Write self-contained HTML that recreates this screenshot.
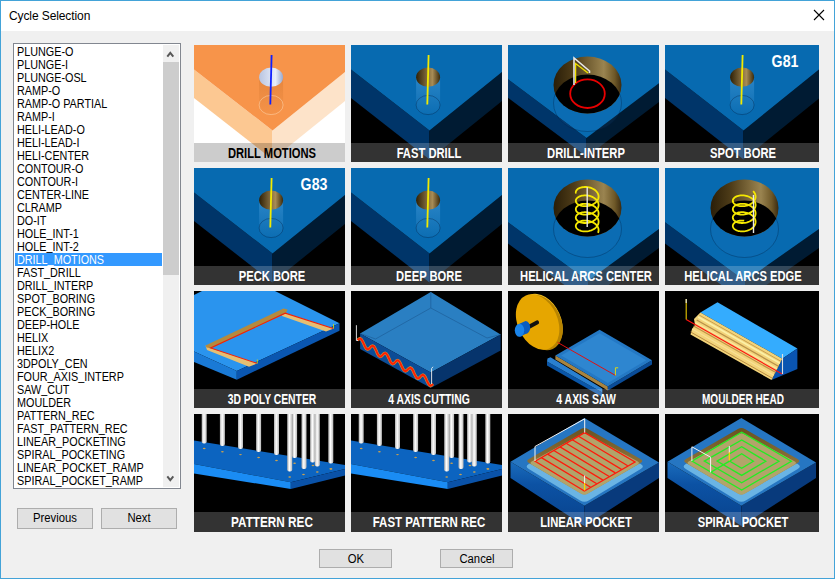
<!DOCTYPE html>
<html><head><meta charset="utf-8">
<style>
*{margin:0;padding:0;box-sizing:border-box}
html,body{width:835px;height:579px;overflow:hidden;background:#f0f0f0;font-family:"Liberation Sans",sans-serif}
#win{position:absolute;left:0;top:0;width:835px;height:579px;border:1px solid #43a3d8;background:#f0f0f0}
#title{position:absolute;left:0;top:0;width:833px;height:30px;background:#fff}
#title span{position:absolute;left:8px;top:8px;font-size:12px;color:#000;letter-spacing:-0.1px}
#close{position:absolute;left:812px;top:8px}
#list{position:absolute;left:12px;top:42px;width:168px;height:446px;border:1px solid #828790;background:#fff;overflow:hidden}
#items{position:absolute;left:1px;top:1px;width:147px}
.it{height:13px;line-height:13px;font-size:12px;color:#000;white-space:nowrap;position:relative}
.it span{position:absolute;left:1.5px;top:1px;transform:scaleX(0.9);transform-origin:0 0}
.it i{font-style:normal;position:relative;top:-1px}
.it.sel{background:#3399ff;color:#fff}
#sb{position:absolute;left:149px;top:1px;width:16px;height:442px;background:#f0f0f0}
#thumb{position:absolute;left:0;top:17px;width:16px;height:213px;background:#cdcdcd}
.btn{position:absolute;height:21px;border:1px solid #adadad;background:#e1e1e1;font-size:12px;color:#000;line-height:19px}
.btn span{position:absolute;left:50%;top:0;transform:translateX(-50%) scaleX(0.94);white-space:nowrap}
#grid{position:absolute;left:0;top:0}
.tile{position:absolute;overflow:hidden;background:#000}
.tile svg{position:absolute;left:0;top:0}
.lab{position:absolute;left:0;bottom:0;width:100%}
.lab span{position:absolute;left:77.8px;top:3px;font-size:14px;font-weight:bold;color:#fff;white-space:nowrap;transform:translateX(-50%) scaleX(0.8);line-height:14px}
</style></head><body>
<div id="win">
 <div id="title"><span>Cycle Selection</span>
  <svg id="close" width="12" height="12" viewBox="0 0 12 12"><path d="M1 1L11 11M11 1L1 11" stroke="#000" stroke-width="1.1"/></svg>
 </div>
 <div id="list">
  <div id="items">
   <div class="it"><span>PLUNGE-O</span></div>
   <div class="it"><span>PLUNGE-I</span></div>
   <div class="it"><span>PLUNGE-OSL</span></div>
   <div class="it"><span>RAMP-O</span></div>
   <div class="it"><span>RAMP-O PARTIAL</span></div>
   <div class="it"><span>RAMP-I</span></div>
   <div class="it"><span>HELI-LEAD-O</span></div>
   <div class="it"><span>HELI-LEAD-I</span></div>
   <div class="it"><span>HELI-CENTER</span></div>
   <div class="it"><span>CONTOUR-O</span></div>
   <div class="it"><span>CONTOUR-I</span></div>
   <div class="it"><span>CENTER-LINE</span></div>
   <div class="it"><span>CLRAMP</span></div>
   <div class="it"><span>DO-IT</span></div>
   <div class="it"><span>HOLE<i>_</i>INT-1</span></div>
   <div class="it"><span>HOLE<i>_</i>INT-2</span></div>
   <div class="it sel"><span>DRILL<i>_</i>MOTIONS</span></div>
   <div class="it"><span>FAST<i>_</i>DRILL</span></div>
   <div class="it"><span>DRILL<i>_</i>INTERP</span></div>
   <div class="it"><span>SPOT<i>_</i>BORING</span></div>
   <div class="it"><span>PECK<i>_</i>BORING</span></div>
   <div class="it"><span>DEEP-HOLE</span></div>
   <div class="it"><span>HELIX</span></div>
   <div class="it"><span>HELIX2</span></div>
   <div class="it"><span>3DPOLY<i>_</i>CEN</span></div>
   <div class="it"><span>FOUR<i>_</i>AXIS<i>_</i>INTERP</span></div>
   <div class="it"><span>SAW<i>_</i>CUT</span></div>
   <div class="it"><span>MOULDER</span></div>
   <div class="it"><span>PATTERN<i>_</i>REC</span></div>
   <div class="it"><span>FAST<i>_</i>PATTERN<i>_</i>REC</span></div>
   <div class="it"><span>LINEAR<i>_</i>POCKETING</span></div>
   <div class="it"><span>SPIRAL<i>_</i>POCKETING</span></div>
   <div class="it"><span>LINEAR<i>_</i>POCKET<i>_</i>RAMP</span></div>
   <div class="it"><span>SPIRAL<i>_</i>POCKET<i>_</i>RAMP</span></div>
  </div>
  <div id="sb">
   <div id="thumb"></div>
   <svg style="position:absolute;left:3px;top:5px" width="9" height="8" viewBox="0 0 9 8"><path d="M1.3 6.6L4.3 2.9L7.3 6.6" fill="none" stroke="#585858" stroke-width="2"/></svg>
   <svg style="position:absolute;left:3px;top:430px" width="9" height="8" viewBox="0 0 9 8"><path d="M1.3 1.4L4.3 5.1L7.3 1.4" fill="none" stroke="#585858" stroke-width="2"/></svg>
  </div>
 </div>
 <div class="btn" style="left:16px;top:507px;width:76px"><span>Previous</span></div>
 <div class="btn" style="left:100px;top:507px;width:76px"><span>Next</span></div>
 <div class="btn" style="left:318px;top:548px;width:73px;height:19px;line-height:18px"><span>OK</span></div>
 <div class="btn" style="left:439px;top:548px;width:73px;height:19px;line-height:18px"><span>Cancel</span></div>
</div>
<div class="tile selt" style="left:194px;top:45px;width:151px;height:117px"><svg width="151" height="117" viewBox="0 0 151 117"><rect width="151" height="117" fill="#ffffff"/><polygon points="0.0,24.5 78.5,85.5 78.5,114.5 0.0,53.0" fill="#fcc892"/><polygon points="78.5,85.5 151.0,27.0 151.0,56.0 78.5,114.5" fill="#fde3c9"/><polygon points="0.0,0.0 151.0,0.0 151.0,27.0 78.5,85.5 0.0,24.5" fill="#f7944a"/><defs><linearGradient id="hg0" x1="0" x2="1" y1="0" y2="0"><stop offset="0" stop-color="#b8c4e0"/><stop offset="0.68" stop-color="#e8eefa"/><stop offset="1" stop-color="#9aa8cc"/></linearGradient></defs><defs><linearGradient id="cy0" x1="0" x2="0" y1="0" y2="1"><stop offset="0" stop-color="rgba(200,110,40,0.35)" stop-opacity="1"/><stop offset="1" stop-color="rgba(200,110,40,0.35)" stop-opacity="0.15"/></linearGradient></defs><path d="M65.1 32.2 L65.1 60 A12 9.6 0 0 0 89.1 60 L89.1 32.2 Z" fill="url(#cy0)"/><ellipse cx="77.1" cy="60" rx="12" ry="9.6" fill="none" stroke="rgba(255,230,200,0.6)" stroke-width="0.7"/><ellipse cx="77.1" cy="32.2" rx="12" ry="9.6" fill="url(#hg0)"/><line x1="77.6" y1="10" x2="76.3" y2="59.4" stroke="#1020ff" stroke-width="1.8"/><rect x="0" y="98" width="151" height="19" fill="rgba(0,0,0,0.2)"/></svg><div class="lab" style="height:19px"><span style="color:#000">DRILL MOTIONS</span></div></div>
<div class="tile" style="left:351px;top:45px;width:151px;height:117px"><svg width="151" height="117" viewBox="0 0 151 117"><rect width="151" height="117" fill="#000000"/><polygon points="0.0,24.5 78.5,85.5 78.5,114.5 0.0,53.0" fill="#003569"/><polygon points="78.5,85.5 151.0,27.0 151.0,56.0 78.5,114.5" fill="#001b33"/><polygon points="0.0,0.0 151.0,0.0 151.0,27.0 78.5,85.5 0.0,24.5" fill="#076ab0"/><defs><linearGradient id="hg1" x1="0" x2="1" y1="0" y2="0"><stop offset="0" stop-color="#2e2006"/><stop offset="0.68" stop-color="#a88c56"/><stop offset="1" stop-color="#3a2a0c"/></linearGradient></defs><defs><linearGradient id="cy1" x1="0" x2="0" y1="0" y2="1"><stop offset="0" stop-color="rgba(130,200,255,0.28)" stop-opacity="1"/><stop offset="1" stop-color="rgba(130,200,255,0.28)" stop-opacity="0.15"/></linearGradient></defs><path d="M65.1 32.2 L65.1 60 A12 9.6 0 0 0 89.1 60 L89.1 32.2 Z" fill="url(#cy1)"/><ellipse cx="77.1" cy="60" rx="12" ry="9.6" fill="none" stroke="rgba(0,20,50,0.45)" stroke-width="0.7"/><ellipse cx="77.1" cy="32.2" rx="12" ry="9.6" fill="url(#hg1)"/><line x1="77.6" y1="10" x2="76.3" y2="59.4" stroke="#f2ea00" stroke-width="1.8"/><rect x="0" y="98" width="151" height="19" fill="rgba(255,255,255,0.2)"/></svg><div class="lab" style="height:19px"><span style="color:#fff">FAST DRILL</span></div></div>
<div class="tile" style="left:508px;top:45px;width:151px;height:117px"><svg width="151" height="117" viewBox="0 0 151 117"><rect width="151" height="117" fill="#000000"/><polygon points="0.0,34.2 78.5,93.0 78.5,111.6 0.0,52.8" fill="#003569"/><polygon points="78.5,93.0 151.0,38.3 151.0,57.0 78.5,111.7" fill="#001b33"/><polygon points="0.0,0.0 151.0,0.0 151.0,38.3 78.5,93.0 0.0,34.2" fill="#076ab0"/><defs><linearGradient id="bg2" x1="0" x2="1" y1="0" y2="0"><stop offset="0" stop-color="#2a1e08"/><stop offset="0.3" stop-color="#4e3c18"/><stop offset="0.74" stop-color="#9a8450"/><stop offset="0.9" stop-color="#6e5828"/><stop offset="1" stop-color="#3a2a10"/></linearGradient><clipPath id="cp2"><ellipse cx="79.5" cy="40" rx="34" ry="28.5"/></clipPath></defs><ellipse cx="79.5" cy="58" rx="34" ry="28.5" fill="rgba(60,140,220,0.08)" stroke="rgba(0,25,60,0.45)" stroke-width="0.7"/><ellipse cx="79.5" cy="40" rx="34" ry="28.5" fill="url(#bg2)"/><ellipse cx="79.5" cy="58" rx="34" ry="28.5" fill="#000" clip-path="url(#cp2)"/><ellipse cx="79.5" cy="48.7" rx="17.3" ry="14.3" fill="none" stroke="#e80000" stroke-width="1.8"/><polyline points="66,40 66,13 81.5,26 81.5,28" fill="none" stroke="#e8e8e8" stroke-width="1.6"/><polyline points="67.6,38 67.6,18.5 80,28" fill="none" stroke="#f0e000" stroke-width="1.3"/><rect x="0" y="98" width="151" height="19" fill="rgba(255,255,255,0.2)"/></svg><div class="lab" style="height:19px"><span style="color:#fff">DRILL-INTERP</span></div></div>
<div class="tile" style="left:665px;top:45px;width:154px;height:117px"><svg width="154" height="117" viewBox="0 0 154 117"><rect width="154" height="117" fill="#000000"/><polygon points="0.0,24.5 78.5,85.5 78.5,114.5 0.0,53.0" fill="#003569"/><polygon points="78.5,85.5 154.0,24.6 154.0,53.6 78.5,114.5" fill="#001b33"/><polygon points="0.0,0.0 154.0,0.0 154.0,24.6 78.5,85.5 0.0,24.5" fill="#076ab0"/><defs><linearGradient id="hg3" x1="0" x2="1" y1="0" y2="0"><stop offset="0" stop-color="#2e2006"/><stop offset="0.68" stop-color="#a88c56"/><stop offset="1" stop-color="#3a2a0c"/></linearGradient></defs><defs><linearGradient id="cy3" x1="0" x2="0" y1="0" y2="1"><stop offset="0" stop-color="rgba(130,200,255,0.28)" stop-opacity="1"/><stop offset="1" stop-color="rgba(130,200,255,0.28)" stop-opacity="0.15"/></linearGradient></defs><path d="M65.1 32.2 L65.1 60 A12 9.6 0 0 0 89.1 60 L89.1 32.2 Z" fill="url(#cy3)"/><ellipse cx="77.1" cy="60" rx="12" ry="9.6" fill="none" stroke="rgba(0,20,50,0.45)" stroke-width="0.7"/><ellipse cx="77.1" cy="32.2" rx="12" ry="9.6" fill="url(#hg3)"/><line x1="77.6" y1="10" x2="76.3" y2="59.4" stroke="#f2ea00" stroke-width="1.8"/><text x="0" y="0" transform="translate(106.6 21.9) scale(0.86 1)" font-size="16.5" font-weight="bold" fill="#fff" font-family="Liberation Sans">G81</text><rect x="0" y="98" width="154" height="19" fill="rgba(255,255,255,0.2)"/></svg><div class="lab" style="height:19px"><span style="color:#fff">SPOT BORE</span></div></div>
<div class="tile" style="left:194px;top:168px;width:151px;height:117px"><svg width="151" height="117" viewBox="0 0 151 117"><rect width="151" height="117" fill="#000000"/><polygon points="0.0,24.5 78.5,85.5 78.5,114.5 0.0,53.0" fill="#003569"/><polygon points="78.5,85.5 151.0,27.0 151.0,56.0 78.5,114.5" fill="#001b33"/><polygon points="0.0,0.0 151.0,0.0 151.0,27.0 78.5,85.5 0.0,24.5" fill="#076ab0"/><defs><linearGradient id="hg4" x1="0" x2="1" y1="0" y2="0"><stop offset="0" stop-color="#2e2006"/><stop offset="0.68" stop-color="#a88c56"/><stop offset="1" stop-color="#3a2a0c"/></linearGradient></defs><defs><linearGradient id="cy4" x1="0" x2="0" y1="0" y2="1"><stop offset="0" stop-color="rgba(130,200,255,0.28)" stop-opacity="1"/><stop offset="1" stop-color="rgba(130,200,255,0.28)" stop-opacity="0.15"/></linearGradient></defs><path d="M65.1 32.2 L65.1 60 A12 9.6 0 0 0 89.1 60 L89.1 32.2 Z" fill="url(#cy4)"/><ellipse cx="77.1" cy="60" rx="12" ry="9.6" fill="none" stroke="rgba(0,20,50,0.45)" stroke-width="0.7"/><ellipse cx="77.1" cy="32.2" rx="12" ry="9.6" fill="url(#hg4)"/><line x1="77.6" y1="10" x2="76.3" y2="59.4" stroke="#f2ea00" stroke-width="1.8"/><text x="0" y="0" transform="translate(106.6 21.9) scale(0.86 1)" font-size="16.5" font-weight="bold" fill="#fff" font-family="Liberation Sans">G83</text><rect x="0" y="98" width="151" height="19" fill="rgba(255,255,255,0.2)"/></svg><div class="lab" style="height:19px"><span style="color:#fff">PECK BORE</span></div></div>
<div class="tile" style="left:351px;top:168px;width:151px;height:117px"><svg width="151" height="117" viewBox="0 0 151 117"><rect width="151" height="117" fill="#000000"/><polygon points="0.0,24.5 78.5,85.5 78.5,114.5 0.0,53.0" fill="#003569"/><polygon points="78.5,85.5 151.0,27.0 151.0,56.0 78.5,114.5" fill="#001b33"/><polygon points="0.0,0.0 151.0,0.0 151.0,27.0 78.5,85.5 0.0,24.5" fill="#076ab0"/><defs><linearGradient id="hg5" x1="0" x2="1" y1="0" y2="0"><stop offset="0" stop-color="#2e2006"/><stop offset="0.68" stop-color="#a88c56"/><stop offset="1" stop-color="#3a2a0c"/></linearGradient></defs><defs><linearGradient id="cy5" x1="0" x2="0" y1="0" y2="1"><stop offset="0" stop-color="rgba(130,200,255,0.28)" stop-opacity="1"/><stop offset="1" stop-color="rgba(130,200,255,0.28)" stop-opacity="0.15"/></linearGradient></defs><path d="M65.1 32.2 L65.1 60 A12 9.6 0 0 0 89.1 60 L89.1 32.2 Z" fill="url(#cy5)"/><ellipse cx="77.1" cy="60" rx="12" ry="9.6" fill="none" stroke="rgba(0,20,50,0.45)" stroke-width="0.7"/><ellipse cx="77.1" cy="32.2" rx="12" ry="9.6" fill="url(#hg5)"/><line x1="77.6" y1="10" x2="76.3" y2="59.4" stroke="#f2ea00" stroke-width="1.8"/><rect x="0" y="98" width="151" height="19" fill="rgba(255,255,255,0.2)"/></svg><div class="lab" style="height:19px"><span style="color:#fff">DEEP BORE</span></div></div>
<div class="tile" style="left:508px;top:168px;width:151px;height:117px"><svg width="151" height="117" viewBox="0 0 151 117"><rect width="151" height="117" fill="#000000"/><polygon points="0.0,54.3 80.0,113.0 80.0,134.3 0.0,75.6" fill="#003569"/><polygon points="80.0,113.0 151.0,61.0 151.0,80.0 80.0,132.0" fill="#001b33"/><polygon points="0.0,0.0 151.0,0.0 151.0,61.0 80.0,113.0 0.0,54.3" fill="#076ab0"/><defs><linearGradient id="bg6" x1="0" x2="1" y1="0" y2="0"><stop offset="0" stop-color="#2a1e08"/><stop offset="0.3" stop-color="#4e3c18"/><stop offset="0.74" stop-color="#9a8450"/><stop offset="0.9" stop-color="#6e5828"/><stop offset="1" stop-color="#3a2a10"/></linearGradient><clipPath id="cp6"><ellipse cx="79.5" cy="40" rx="34" ry="28.5"/></clipPath></defs><ellipse cx="79.5" cy="61" rx="34" ry="28.5" fill="rgba(60,140,220,0.08)" stroke="rgba(0,25,60,0.45)" stroke-width="0.7"/><ellipse cx="79.5" cy="40" rx="34" ry="28.5" fill="url(#bg6)"/><ellipse cx="79.5" cy="61" rx="34" ry="28.5" fill="#000" clip-path="url(#cp6)"/><path d="M68.03,25.60 L67.84,24.88 L67.81,24.16 L67.95,23.44 L68.24,22.73 L68.70,22.05 L69.31,21.42 L70.05,20.84 L70.93,20.32 L71.93,19.87 L73.04,19.51 L74.23,19.24 L75.49,19.06 L76.81,18.98 L78.16,19.01 L79.52,19.14 L80.89,19.38 L82.22,19.72 L83.52,20.17 L84.75,20.72 L85.90,21.35 L86.96,22.08 L87.90,22.88 L88.72,23.75 L89.40,24.68 L89.94,25.65 L90.32,26.67 L90.54,27.70 L90.60,28.75 L90.49,29.79 L90.23,30.82 L89.80,31.83 L89.22,32.79 L88.50,33.71 L87.64,34.56 L86.67,35.34 L85.58,36.04 L84.41,36.65 L83.15,37.17 L81.85,37.58 L80.50,37.90 L79.14,38.11 L77.77,38.21 L76.43,38.21 L75.13,38.10 L73.88,37.89 L72.71,37.59 L71.64,37.21 L70.67,36.74 L69.83,36.20 L69.12,35.60 L68.55,34.96 L68.14,34.27 L67.89,33.56 L67.80,32.84 L67.87,32.11 L68.11,31.40 L68.51,30.71 L69.06,30.06 L69.75,29.45 L70.58,28.91 L71.54,28.43 L72.60,28.04 L73.76,27.73 L75.00,27.52 L76.30,27.40 L77.64,27.39 L79.00,27.48 L80.37,27.68 L81.72,27.98 L83.03,28.39 L84.29,28.90 L85.47,29.50 L86.57,30.19 L87.55,30.96 L88.42,31.81 L89.16,32.72 L89.75,33.68 L90.19,34.68 L90.47,35.71 L90.60,36.75 L90.55,37.80 L90.35,38.83 L89.98,39.85 L89.46,40.83 L88.79,41.76 L87.98,42.64 L87.05,43.45 L86.01,44.18 L84.86,44.83 L83.64,45.38 L82.35,45.84 L81.02,46.19 L79.66,46.44 L78.29,46.58 L76.94,46.62 L75.62,46.55 L74.35,46.38 L73.15,46.12 L72.03,45.76 L71.03,45.33 L70.13,44.81 L69.37,44.24 L68.75,43.61 L68.28,42.94 L67.97,42.23 L67.82,41.51 L67.83,40.79 L68.00,40.07 L68.34,39.37 L68.83,38.70 L69.47,38.08 L70.25,37.51 L71.16,37.01 L72.19,36.58 L73.31,36.24 L74.52,35.99 L75.80,35.83 L77.13,35.78 L78.48,35.83 L79.85,35.99 L81.21,36.25 L82.54,36.62 L83.82,37.09 L85.03,37.66 L86.16,38.32 L87.19,39.06 L88.11,39.88 L88.89,40.77 L89.54,41.71 L90.04,42.69 L90.39,43.71 L90.57,44.75 L90.59,45.80 L90.44,46.84 L90.14,47.87 L89.68,48.86 L89.06,49.81 L88.31,50.71 L87.42,51.55 L86.42,52.31 L85.31,52.99 L84.11,53.58 L82.85,54.08 L81.53,54.47 L80.18,54.76 L78.81,54.94 L77.45,55.02 L76.11,54.99 L74.82,54.86 L73.59,54.63 L72.45,54.31 L71.40,53.90 L70.46,53.42 L69.65,52.87 L68.97,52.25 L68.44,51.60 L68.07,50.90 L67.85,50.19 L67.80,49.46 L67.92,48.74 L68.19,48.03 L68.62,47.35 L69.21,46.71 L69.94,46.12 L70.80,45.59 L71.78,45.13 L72.87,44.76 L74.05,44.47 L75.31,44.28 L76.62,44.19 L77.96,44.20 L79.33,44.32 L80.69,44.54 L82.03,44.87 L83.34,45.30 L84.58,45.83 L85.74,46.46 L86.81,47.17 L87.77,47.96 L88.61,48.82 L89.31,49.74 L89.87,50.71 L90.27,51.72 L90.52,52.75 L90.60,53.80 L90.52,54.85 L90.27,55.88 L89.87,56.89 L89.31,57.86 L88.61,58.78 L87.77,59.64 L86.81,60.43 L85.74,61.14 L84.58,61.77 L83.34,62.30 L82.04,62.73 L80.69,63.06 L79.33,63.28 L77.97,63.40 L76.62,63.41 L75.31,63.32 L74.05,63.13 L72.87,62.84 L71.78,62.47 L70.80,62.01 L69.94,61.48 L69.21,60.89 L68.62,60.25 L68.19,59.57 L67.92,58.86 L67.80,58.14 L67.85,57.41 L68.07,56.70 L68.44,56.00 L68.97,55.35 L69.65,54.74 L70.46,54.18 L71.40,53.70 L72.45,53.29 L73.59,52.97 L74.82,52.74 L76.11,52.61 L77.45,52.58 L78.81,52.66 L80.18,52.84 L81.53,53.13 L82.85,53.52 L84.11,54.02 L85.31,54.61 L86.42,55.29 L87.42,56.05 L88.31,56.89 L89.06,57.79 L89.68,58.74 L90.14,59.73 L90.44,60.76 L90.59,61.80 L90.57,62.85 L90.39,63.89 L90.04,64.91" fill="none" stroke="#f5e800" stroke-width="1.8"/><line x1="79.2" y1="19.3" x2="79.2" y2="59" stroke="#e8e8e8" stroke-width="1.4"/><rect x="0" y="98" width="151" height="19" fill="rgba(255,255,255,0.2)"/></svg><div class="lab" style="height:19px"><span style="color:#fff">HELICAL ARCS CENTER</span></div></div>
<div class="tile" style="left:665px;top:168px;width:154px;height:117px"><svg width="154" height="117" viewBox="0 0 154 117"><rect width="154" height="117" fill="#000000"/><polygon points="0.0,54.3 80.0,113.0 80.0,134.3 0.0,75.6" fill="#003569"/><polygon points="80.0,113.0 154.0,61.0 154.0,80.0 80.0,132.0" fill="#001b33"/><polygon points="0.0,0.0 154.0,0.0 154.0,61.0 80.0,113.0 0.0,54.3" fill="#076ab0"/><defs><linearGradient id="bg7" x1="0" x2="1" y1="0" y2="0"><stop offset="0" stop-color="#2a1e08"/><stop offset="0.3" stop-color="#4e3c18"/><stop offset="0.74" stop-color="#9a8450"/><stop offset="0.9" stop-color="#6e5828"/><stop offset="1" stop-color="#3a2a10"/></linearGradient><clipPath id="cp7"><ellipse cx="79.5" cy="40" rx="34" ry="28.5"/></clipPath></defs><ellipse cx="79.5" cy="61" rx="34" ry="28.5" fill="rgba(60,140,220,0.08)" stroke="rgba(0,25,60,0.45)" stroke-width="0.7"/><ellipse cx="79.5" cy="40" rx="34" ry="28.5" fill="url(#bg7)"/><ellipse cx="79.5" cy="61" rx="34" ry="28.5" fill="#000" clip-path="url(#cp7)"/><path d="M88.13,23.10 L88.80,23.85 L89.37,24.63 L89.84,25.45 L90.20,26.29 L90.44,27.16 L90.58,28.03 L90.59,28.91 L90.49,29.79 L90.28,30.66 L89.95,31.51 L89.51,32.34 L88.97,33.13 L88.33,33.89 L87.60,34.60 L86.78,35.26 L85.88,35.86 L84.91,36.40 L83.89,36.88 L82.82,37.28 L81.71,37.62 L80.58,37.88 L79.43,38.07 L78.28,38.18 L77.14,38.22 L76.02,38.18 L74.93,38.07 L73.89,37.90 L72.90,37.65 L71.97,37.34 L71.12,36.97 L70.35,36.55 L69.67,36.09 L69.09,35.58 L68.61,35.03 L68.24,34.46 L67.98,33.87 L67.83,33.26 L67.80,32.65 L67.89,32.04 L68.09,31.44 L68.41,30.86 L68.83,30.30 L69.36,29.77 L69.99,29.28 L70.71,28.84 L71.53,28.44 L72.41,28.10 L73.37,27.82 L74.39,27.61 L75.46,27.46 L76.56,27.39 L77.69,27.39 L78.84,27.46 L79.99,27.61 L81.13,27.83 L82.25,28.13 L83.34,28.50 L84.39,28.95 L85.39,29.45 L86.32,30.03 L87.18,30.66 L87.96,31.34 L88.65,32.07 L89.25,32.85 L89.74,33.66 L90.12,34.50 L90.40,35.36 L90.56,36.23 L90.60,37.11 L90.53,37.99 L90.34,38.87 L90.04,39.72 L89.62,40.55 L89.11,41.35 L88.49,42.12 L87.77,42.84 L86.97,43.51 L86.09,44.13 L85.14,44.68 L84.13,45.17 L83.07,45.60 L81.97,45.95 L80.84,46.23 L79.69,46.44 L78.54,46.56 L77.40,46.62 L76.27,46.60 L75.18,46.51 L74.12,46.34 L73.12,46.11 L72.18,45.82 L71.31,45.46 L70.52,45.05 L69.82,44.60 L69.21,44.10 L68.71,43.56 L68.31,42.99 L68.03,42.41 L67.86,41.80 L67.80,41.19 L67.86,40.58 L68.03,39.98 L68.32,39.39 L68.72,38.82 L69.23,38.29 L69.84,37.79 L70.54,37.33 L71.33,36.93 L72.20,36.57 L73.15,36.28 L74.15,36.05 L75.21,35.89 L76.30,35.80 L77.43,35.78 L78.58,35.84 L79.73,35.97 L80.87,36.18 L82.00,36.46 L83.10,36.81 L84.16,37.24 L85.17,37.73 L86.12,38.29 L86.99,38.91 L87.79,39.58 L88.50,40.30 L89.12,41.07 L89.64,41.87 L90.05,42.70 L90.34,43.56 L90.53,44.43 L90.60,45.31 L90.55,46.19 L90.39,47.07 L90.11,47.93 L89.73,48.77 L89.23,49.57 L88.64,50.35 L87.94,51.08 L87.16,51.76 L86.30,52.39 L85.36,52.96 L84.37,53.47 L83.31,53.91 L82.22,54.28 L81.10,54.57 L79.96,54.79 L78.81,54.94 L77.66,55.01 L76.53,55.01 L75.43,54.93 L74.36,54.79 L73.34,54.57 L72.39,54.29 L71.50,53.95 L70.69,53.55 L69.97,53.11 L69.34,52.61 L68.82,52.09 L68.40,51.53 L68.08,50.94 L67.89,50.34 L67.80,49.73 L67.84,49.12 L67.98,48.51 L68.25,47.92 L68.62,47.35 L69.11,46.81 L69.69,46.30 L70.37,45.83 L71.14,45.41 L72.00,45.05 L72.93,44.74 L73.92,44.50 L74.96,44.32 L76.05,44.21 L77.17,44.18 L78.31,44.22 L79.46,44.33 L80.61,44.52 L81.74,44.79 L82.85,45.13 L83.92,45.54 L84.94,46.01 L85.91,46.56 L86.80,47.16 L87.62,47.82 L88.35,48.53 L88.99,49.29 L89.53,50.08 L89.96,50.91 L90.29,51.76 L90.50,52.63 L90.59,53.51 L90.57,54.39 L90.44,55.27 L90.19,56.13 L89.83,56.98 L89.36,57.79 L88.78,58.58 L88.11,59.32 L87.35,60.01 L86.50,60.65 L85.58,61.24 L84.60,61.76 L83.56,62.21 L82.47,62.60 L81.36,62.91 L80.22,63.15 L79.07,63.31 L77.92,63.40 L76.78,63.42 L75.67,63.36 L74.60,63.23 L73.57,63.03 L72.60,62.76 L71.70,62.43 L70.87,62.05 L70.13,61.61 L69.48,61.13 L68.93,60.61 L68.48,60.06 L68.15,59.48 L67.92,58.88 L67.81,58.27 L67.82,57.66 L67.94,57.05 L68.18,56.46 L68.53,55.88 L68.99,55.33 L69.55,54.81 L70.21,54.34 L70.96,53.91 L71.80,53.53 L72.71,53.21 L73.69,52.95 L74.72,52.76 L75.80,52.63 L76.91,52.58 L78.05,52.60 L79.20,52.70" fill="none" stroke="#f5e800" stroke-width="1.8"/><line x1="88.5" y1="27" x2="88.5" y2="65" stroke="#e8e8e8" stroke-width="1.4"/><rect x="0" y="98" width="154" height="19" fill="rgba(255,255,255,0.2)"/></svg><div class="lab" style="height:19px"><span style="color:#fff">HELICAL ARCS EDGE</span></div></div>
<div class="tile" style="left:194px;top:291px;width:151px;height:117px"><svg width="151" height="117" viewBox="0 0 151 117"><rect width="151" height="117" fill="#000"/><polygon points="0.0,4.0 8.0,0.0 81.0,0.0 145.5,32.3 42.8,80.0 0.0,60.4" fill="#2a94ee"/><polygon points="0.0,60.4 42.8,80.0 42.8,88.7 0.0,71.0" fill="#1a7ad6"/><polygon points="42.8,80.0 145.5,32.3 145.5,39.8 42.8,88.7" fill="#0a56b0"/><polygon points="11.5,54.5 17.0,57.3 63.5,72.3 55.0,75.8 13.0,59.0" fill="#e6bf72"/><polygon points="89.5,17.5 92.0,22.3 139.8,37.6 132.0,40.6 88.0,25.0" fill="#e6bf72"/><polygon points="11.5,54.5 89.5,17.5 93.5,18.5 92.0,22.3 17.0,57.3 12.5,56.5" fill="#b48a3e"/><polyline points="62.8,72.3 16.6,57 91.2,22.2 139.3,37.4" fill="none" stroke="#f0200a" stroke-width="1.1"/><line x1="63.3" y1="68.5" x2="63.3" y2="72.5" stroke="#e0e000" stroke-width="0.8"/><line x1="139.5" y1="33" x2="139.5" y2="37.5" stroke="#e0e000" stroke-width="0.8"/><rect x="0" y="98" width="151" height="19" fill="rgba(255,255,255,0.2)"/></svg><div class="lab" style="height:19px"><span style="color:#fff;transform:translateX(-50%) scaleX(0.739)">3D POLY CENTER</span></div></div>
<div class="tile" style="left:351px;top:291px;width:151px;height:117px"><svg width="151" height="117" viewBox="0 0 151 117"><rect width="151" height="117" fill="#000"/><polygon points="79.8,1.0 149.6,43.5 79.8,81.5 9.1,42.4" fill="#2a7fc2"/><polygon points="9.1,42.4 79.8,81.5 79.8,97.0 9.1,58.0" fill="#0c4c96"/><polygon points="79.8,81.5 149.6,43.5 149.6,59.5 79.8,97.0" fill="#06346c"/><polyline points="24.5,48.0 79.8,17.0 136.0,47.0" fill="none" stroke="#1c5e9a" stroke-width="0.7"/><line x1="79.8" y1="1" x2="79.8" y2="17" stroke="#1c5e9a" stroke-width="0.7"/><line x1="9.1" y1="42.4" x2="24.5" y2="48" stroke="#1c5e9a" stroke-width="0.7"/><line x1="149.6" y1="43.5" x2="136" y2="47" stroke="#1c5e9a" stroke-width="0.7"/><polyline points="6.5,49.3 7.8,48.0 9.0,47.5 10.3,48.3 11.5,50.2 12.8,52.9 14.1,55.7 15.3,57.6 16.6,58.4 17.8,57.9 19.1,56.6 20.3,55.3 21.6,54.8 22.9,55.5 24.1,57.5 25.4,60.2 26.6,63.0 27.9,64.9 29.1,65.6 30.4,65.1 31.7,63.9 32.9,62.6 34.2,62.1 35.4,62.8 36.7,64.8 38.0,67.5 39.2,70.2 40.5,72.2 41.7,72.9 43.0,72.4 44.2,71.2 45.5,69.9 46.8,69.4 48.0,70.1 49.3,72.1 50.5,74.8 51.8,77.5 53.1,79.5 54.3,80.2 55.6,79.7 56.8,78.4 58.1,77.2 59.3,76.7 60.6,77.4 61.9,79.3 63.1,82.1 64.4,84.8 65.6,86.8 66.9,87.5 68.2,87.0 69.4,85.7 70.7,84.4 71.9,83.9 73.2,84.7 74.5,86.6 75.7,89.4 77.0,92.1 78.2,94.0 79.5,94.8 80.7,94.3 82.0,93.0" fill="none" stroke="#c89038" stroke-width="3.0"/><polyline points="6.5,49.3 7.8,48.0 9.0,47.5 10.3,48.3 11.5,50.2 12.8,52.9 14.1,55.7 15.3,57.6 16.6,58.4 17.8,57.9 19.1,56.6 20.3,55.3 21.6,54.8 22.9,55.5 24.1,57.5 25.4,60.2 26.6,63.0 27.9,64.9 29.1,65.6 30.4,65.1 31.7,63.9 32.9,62.6 34.2,62.1 35.4,62.8 36.7,64.8 38.0,67.5 39.2,70.2 40.5,72.2 41.7,72.9 43.0,72.4 44.2,71.2 45.5,69.9 46.8,69.4 48.0,70.1 49.3,72.1 50.5,74.8 51.8,77.5 53.1,79.5 54.3,80.2 55.6,79.7 56.8,78.4 58.1,77.2 59.3,76.7 60.6,77.4 61.9,79.3 63.1,82.1 64.4,84.8 65.6,86.8 66.9,87.5 68.2,87.0 69.4,85.7 70.7,84.4 71.9,83.9 73.2,84.7 74.5,86.6 75.7,89.4 77.0,92.1 78.2,94.0 79.5,94.8 80.7,94.3 82.0,93.0" fill="none" stroke="#ff1e00" stroke-width="1.9"/><polyline points="5.4,34.2 5.4,49.5 7,49.5" fill="none" stroke="#f0f0f0" stroke-width="0.9"/><polyline points="80.6,93 80.6,77.5 82,75.8" fill="none" stroke="#f0f0f0" stroke-width="0.9"/><rect x="0" y="98" width="151" height="19" fill="rgba(255,255,255,0.2)"/></svg><div class="lab" style="height:19px"><span style="color:#fff;transform:translateX(-50%) scaleX(0.743)">4 AXIS CUTTING</span></div></div>
<div class="tile" style="left:508px;top:291px;width:151px;height:117px"><svg width="151" height="117" viewBox="0 0 151 117"><rect width="151" height="117" fill="#000"/><ellipse cx="33" cy="30.5" rx="20" ry="29" transform="rotate(-24 33 30.5)" fill="#f2bf22"/><ellipse cx="33" cy="31.5" rx="20" ry="29" transform="rotate(-24 33 31.5)" fill="#b88400"/><ellipse cx="29.6" cy="31" rx="20" ry="29" transform="rotate(-24 29.6 31)" fill="#e6a600"/><line x1="17" y1="38" x2="29" y2="31.5" stroke="#101010" stroke-width="4.2" stroke-linecap="round"/><path d="M11.5,32.8 L17.5,30 A4.7,6.5 0 0 1 17.5,43 L11.5,45.8 Z" fill="#0a5cc0"/><ellipse cx="11.5" cy="39.3" rx="4.7" ry="6.5" fill="#1a84ea"/><polygon points="47.4,64.4 99.8,95.5 99.8,99.5 47.4,68.6" fill="#a88440"/><polygon points="99.8,95.5 144.0,69.2 144.0,73.4 99.8,99.5" fill="#0a4c98"/><polygon points="91.6,38.8 144.0,69.2 99.8,95.5 47.4,64.4" fill="#2478c4"/><polygon points="91.6,42.3 138.2,69.3 99.8,92.0 53.2,64.6" fill="#2e86d0"/><polygon points="39.0,70.5 94.3,101.5 94.3,106.0 39.0,74.5" fill="#0a56a8"/><polygon points="39.5,67.5 42.5,66.3 94.3,97.5 94.3,101.5 39.0,70.5" fill="#2a80d0"/><line x1="49.6" y1="51.4" x2="107.4" y2="84.4" stroke="#e01010" stroke-width="1"/><polyline points="107.4,84.4 107.4,76.8 110.2,76.8" fill="none" stroke="#f0e000" stroke-width="0.9"/><rect x="0" y="98" width="151" height="19" fill="rgba(255,255,255,0.2)"/></svg><div class="lab" style="height:19px"><span style="color:#fff;transform:translateX(-50%) scaleX(0.748)">4 AXIS SAW</span></div></div>
<div class="tile" style="left:665px;top:291px;width:154px;height:117px"><svg width="154" height="117" viewBox="0 0 154 117"><rect width="154" height="117" fill="#000"/><polygon points="35.4,21.5 52.5,11.3 132.4,57.6 117.2,67.8" fill="#34acfe"/><polygon points="117.2,67.8 132.4,57.6 132.4,78.0 106.5,89.0" fill="#0a54b0"/><polygon points="35.4,21.5 117.2,67.8 106.5,89.0 25.5,43.5 27.0,38.0 30.0,34.0 29.0,28.0" fill="#f3d47a"/><line x1="34.15" y1="24.0" x2="115.95" y2="70.3" stroke="#c8a050" stroke-width="1.0"/><line x1="33.15" y1="26.0" x2="114.95" y2="72.3" stroke="#fbf0a8" stroke-width="1.6"/><line x1="31.65" y1="29.0" x2="113.45" y2="75.3" stroke="#b8904a" stroke-width="1.3"/><line x1="30.4" y1="31.5" x2="112.2" y2="77.8" stroke="#fae6a0" stroke-width="1.3"/><line x1="28.65" y1="35.0" x2="110.45" y2="81.3" stroke="#c09048" stroke-width="1.2"/><line x1="27.15" y1="38.0" x2="108.95" y2="84.3" stroke="#f8e098" stroke-width="1.2"/><line x1="25.65" y1="41.0" x2="107.45" y2="87.3" stroke="#b88c44" stroke-width="1.0"/><line x1="21.2" y1="28.5" x2="117.2" y2="83" stroke="#ff1010" stroke-width="1.1"/><line x1="21.2" y1="8" x2="21.2" y2="28.5" stroke="#e8c800" stroke-width="1.1"/><line x1="21.2" y1="8" x2="21.2" y2="12" stroke="#e8e8e8" stroke-width="1.1"/><line x1="117.5" y1="63" x2="117.5" y2="83" stroke="#e0e0e0" stroke-width="1.1"/><rect x="0" y="98" width="154" height="19" fill="rgba(255,255,255,0.2)"/></svg><div class="lab" style="height:19px"><span style="color:#fff;transform:translateX(-50%) scaleX(0.718)">MOULDER HEAD</span></div></div>
<div class="tile" style="left:194px;top:414px;width:151px;height:118px"><svg width="151" height="118" viewBox="0 0 151 118"><rect width="151" height="118" fill="#000"/><polygon points="0.0,26.5 151.0,51.0 151.0,55.0 96.8,68.3 0.0,50.0" fill="#0c64c0"/><polygon points="0.0,50.0 96.8,68.3 96.8,75.0 0.0,59.5" fill="#1a8cf4"/><polygon points="96.8,68.3 151.0,55.0 151.0,61.5 96.8,75.0" fill="#0a52a8"/><defs><linearGradient id="pin" x1="0" x2="1"><stop offset="0" stop-color="#b0b0b0"/><stop offset="0.45" stop-color="#ffffff"/><stop offset="1" stop-color="#b8b8b8"/></linearGradient></defs><ellipse cx="10.2" cy="34.5" rx="1.4" ry="0.7" fill="#c8a050"/><ellipse cx="28.4" cy="37.7" rx="1.4" ry="0.7" fill="#c8a050"/><ellipse cx="46.5" cy="40.6" rx="1.4" ry="0.7" fill="#c8a050"/><ellipse cx="64.6" cy="43.5" rx="1.4" ry="0.7" fill="#c8a050"/><ellipse cx="82.5" cy="46.5" rx="1.4" ry="0.7" fill="#c8a050"/><ellipse cx="100.6" cy="49.2" rx="1.4" ry="0.7" fill="#c8a050"/><ellipse cx="119.0" cy="51.5" rx="1.4" ry="0.7" fill="#c8a050"/><ellipse cx="136.8" cy="54.8" rx="1.4" ry="0.7" fill="#c8a050"/><ellipse cx="95.7" cy="63" rx="1.4" ry="0.7" fill="#c8a050"/><ellipse cx="109.5" cy="60.5" rx="1.4" ry="0.7" fill="#c8a050"/><ellipse cx="123.3" cy="58" rx="1.4" ry="0.7" fill="#c8a050"/><ellipse cx="137.0" cy="55" rx="1.4" ry="0.7" fill="#c8a050"/><rect x="7.699999999999999" y="-3" width="5" height="32.5" rx="2" fill="url(#pin)"/><rect x="25.9" y="-3" width="5" height="35" rx="2" fill="url(#pin)"/><rect x="44.0" y="-3" width="5" height="38" rx="2" fill="url(#pin)"/><rect x="62.099999999999994" y="-3" width="5" height="41" rx="2" fill="url(#pin)"/><rect x="80.0" y="-3" width="5" height="44" rx="2" fill="url(#pin)"/><rect x="98.1" y="-3" width="5" height="47" rx="2" fill="url(#pin)"/><rect x="116.1" y="-3" width="5" height="51.5" rx="2" fill="url(#pin)"/><rect x="134.3" y="-3" width="5" height="52.5" rx="2" fill="url(#pin)"/><rect x="93.2" y="-3" width="5" height="60.5" rx="2" fill="url(#pin)"/><rect x="107.5" y="-3" width="5" height="58" rx="2" fill="url(#pin)"/><rect x="120.8" y="-3" width="5" height="55.5" rx="2" fill="url(#pin)"/><rect x="0" y="98" width="151" height="20" fill="rgba(255,255,255,0.2)"/></svg><div class="lab" style="height:20px"><span style="color:#fff;transform:translateX(-50%) scaleX(0.839)">PATTERN REC</span></div></div>
<div class="tile" style="left:351px;top:414px;width:151px;height:118px"><svg width="151" height="118" viewBox="0 0 151 118"><rect width="151" height="118" fill="#000"/><polygon points="0.0,26.5 151.0,51.0 151.0,55.0 96.8,68.3 0.0,50.0" fill="#0c64c0"/><polygon points="0.0,50.0 96.8,68.3 96.8,75.0 0.0,59.5" fill="#1a8cf4"/><polygon points="96.8,68.3 151.0,55.0 151.0,61.5 96.8,75.0" fill="#0a52a8"/><defs><linearGradient id="pin" x1="0" x2="1"><stop offset="0" stop-color="#b0b0b0"/><stop offset="0.45" stop-color="#ffffff"/><stop offset="1" stop-color="#b8b8b8"/></linearGradient></defs><ellipse cx="10.2" cy="34.5" rx="1.4" ry="0.7" fill="#c8a050"/><ellipse cx="28.4" cy="37.7" rx="1.4" ry="0.7" fill="#c8a050"/><ellipse cx="46.5" cy="40.6" rx="1.4" ry="0.7" fill="#c8a050"/><ellipse cx="64.6" cy="43.5" rx="1.4" ry="0.7" fill="#c8a050"/><ellipse cx="82.5" cy="46.5" rx="1.4" ry="0.7" fill="#c8a050"/><ellipse cx="100.6" cy="49.2" rx="1.4" ry="0.7" fill="#c8a050"/><ellipse cx="119.0" cy="51.5" rx="1.4" ry="0.7" fill="#c8a050"/><ellipse cx="136.8" cy="54.8" rx="1.4" ry="0.7" fill="#c8a050"/><ellipse cx="95.7" cy="63" rx="1.4" ry="0.7" fill="#c8a050"/><ellipse cx="109.5" cy="60.5" rx="1.4" ry="0.7" fill="#c8a050"/><ellipse cx="123.3" cy="58" rx="1.4" ry="0.7" fill="#c8a050"/><ellipse cx="137.0" cy="55" rx="1.4" ry="0.7" fill="#c8a050"/><rect x="7.699999999999999" y="-3" width="5" height="32.5" rx="2" fill="url(#pin)"/><rect x="25.9" y="-3" width="5" height="35" rx="2" fill="url(#pin)"/><rect x="44.0" y="-3" width="5" height="38" rx="2" fill="url(#pin)"/><rect x="62.099999999999994" y="-3" width="5" height="41" rx="2" fill="url(#pin)"/><rect x="80.0" y="-3" width="5" height="44" rx="2" fill="url(#pin)"/><rect x="98.1" y="-3" width="5" height="47" rx="2" fill="url(#pin)"/><rect x="116.1" y="-3" width="5" height="51.5" rx="2" fill="url(#pin)"/><rect x="134.3" y="-3" width="5" height="52.5" rx="2" fill="url(#pin)"/><rect x="93.2" y="-3" width="5" height="60.5" rx="2" fill="url(#pin)"/><rect x="107.5" y="-3" width="5" height="58" rx="2" fill="url(#pin)"/><rect x="120.8" y="-3" width="5" height="55.5" rx="2" fill="url(#pin)"/><rect x="0" y="98" width="151" height="20" fill="rgba(255,255,255,0.2)"/></svg><div class="lab" style="height:20px"><span style="color:#fff;transform:translateX(-50%) scaleX(0.821)">FAST PATTERN REC</span></div></div>
<div class="tile" style="left:508px;top:414px;width:151px;height:118px"><svg width="151" height="118" viewBox="0 0 151 118"><rect width="151" height="118" fill="#000"/><defs><linearGradient id="lf14" x1="0" y1="0" x2="0" y2="1"><stop offset="0" stop-color="#1a6cbc"/><stop offset="0.35" stop-color="#0c52a4"/><stop offset="1" stop-color="#08428c"/></linearGradient><linearGradient id="bw14" x1="0" y1="0" x2="0" y2="1"><stop offset="0" stop-color="#6a5220"/><stop offset="0.5" stop-color="#8a7038"/><stop offset="1" stop-color="#a89058"/></linearGradient></defs><polygon points="2.5,47.7 76.4,91.7 76.4,112.0 2.5,64.0" fill="url(#lf14)"/><polygon points="76.4,91.7 151.0,48.5 151.0,64.0 76.4,112.0" fill="#083a7c"/><polygon points="76.4,4.0 151.0,48.5 76.4,91.7 2.5,47.7" fill="#2676c2"/><path d="M20.8,55.1 Q16.5,52.5 20.8,50.0 L72.1,19.5 Q76.4,17.0 80.7,19.5 L132.7,50.0 Q137.0,52.5 132.7,55.1 L80.7,86.4 Q76.4,89.0 72.1,86.4 Z" fill="#6ab4e4"/><path d="M21.0,49.0 Q17.5,47.0 21.0,45.0 L72.9,15.0 Q76.4,13.0 79.9,15.0 L132.5,45.0 Q136.0,47.0 132.5,49.0 L79.9,79.5 Q76.4,81.5 72.9,79.5 Z" fill="url(#bw14)"/><path d="M24.0,50.8 Q21.0,49.0 24.1,47.3 L73.3,20.2 Q76.4,18.5 79.5,20.2 L129.4,47.3 Q132.5,49.0 129.5,50.8 L79.4,79.7 Q76.4,81.5 73.4,79.7 Z" fill="#b2a46a"/><polygon points="27.2,47.2 76.7,18.6 127,48 76.4,77" fill="none" stroke="#ff1a0a" stroke-width="1.3"/><line x1="33.4" y1="43.6" x2="82.6" y2="73.2" stroke="#ff1a0a" stroke-width="1.3"/><line x1="39.6" y1="40.1" x2="88.8" y2="69.7" stroke="#ff1a0a" stroke-width="1.3"/><line x1="45.8" y1="36.5" x2="95.0" y2="66.1" stroke="#ff1a0a" stroke-width="1.3"/><line x1="52.0" y1="32.9" x2="101.2" y2="62.5" stroke="#ff1a0a" stroke-width="1.3"/><line x1="58.1" y1="29.3" x2="107.3" y2="58.9" stroke="#ff1a0a" stroke-width="1.3"/><line x1="64.3" y1="25.8" x2="113.5" y2="55.4" stroke="#ff1a0a" stroke-width="1.3"/><line x1="70.5" y1="22.2" x2="119.7" y2="51.8" stroke="#ff1a0a" stroke-width="1.3"/><polyline points="27,47 27,32.5 76.7,4.8 76.7,18.6" fill="none" stroke="#f4f4f4" stroke-width="1"/><line x1="76.6" y1="61.5" x2="76.6" y2="69.5" stroke="#f4f4f4" stroke-width="1"/><line x1="76.6" y1="69" x2="76.6" y2="76.5" stroke="#ffd800" stroke-width="1.2"/><rect x="0" y="98" width="151" height="20" fill="rgba(255,255,255,0.2)"/></svg><div class="lab" style="height:20px"><span style="color:#fff">LINEAR POCKET</span></div></div>
<div class="tile" style="left:665px;top:414px;width:154px;height:118px"><svg width="154" height="118" viewBox="0 0 154 118"><rect width="154" height="118" fill="#000"/><defs><linearGradient id="lf15" x1="0" y1="0" x2="0" y2="1"><stop offset="0" stop-color="#1a6cbc"/><stop offset="0.35" stop-color="#0c52a4"/><stop offset="1" stop-color="#08428c"/></linearGradient><linearGradient id="bw15" x1="0" y1="0" x2="0" y2="1"><stop offset="0" stop-color="#6a5220"/><stop offset="0.5" stop-color="#8a7038"/><stop offset="1" stop-color="#a89058"/></linearGradient></defs><polygon points="2.5,47.7 76.4,91.7 76.4,112.0 2.5,64.0" fill="url(#lf15)"/><polygon points="76.4,91.7 151.0,48.5 151.0,64.0 76.4,112.0" fill="#083a7c"/><polygon points="76.4,4.0 151.0,48.5 76.4,91.7 2.5,47.7" fill="#2676c2"/><path d="M20.8,55.1 Q16.5,52.5 20.8,50.0 L72.1,19.5 Q76.4,17.0 80.7,19.5 L132.7,50.0 Q137.0,52.5 132.7,55.1 L80.7,86.4 Q76.4,89.0 72.1,86.4 Z" fill="#6ab4e4"/><path d="M21.0,49.0 Q17.5,47.0 21.0,45.0 L72.9,15.0 Q76.4,13.0 79.9,15.0 L132.5,45.0 Q136.0,47.0 132.5,49.0 L79.9,79.5 Q76.4,81.5 72.9,79.5 Z" fill="url(#bw15)"/><path d="M24.0,50.8 Q21.0,49.0 24.1,47.3 L73.3,20.2 Q76.4,18.5 79.5,20.2 L129.4,47.3 Q132.5,49.0 129.5,50.8 L79.4,79.7 Q76.4,81.5 73.4,79.7 Z" fill="#b2a46a"/><polygon points="26.9,47.1 76.7,18.3 126.4,47.2 76.7,76" fill="none" stroke="#22ee22" stroke-width="1.3"/><polygon points="39.3,47.1 76.7,25.9 114,47.2 76.7,68.7" fill="none" stroke="#22ee22" stroke-width="1.3"/><polygon points="52,47.1 76.7,32.8 100.8,47.2 76.7,61.4" fill="none" stroke="#22ee22" stroke-width="1.3"/><polygon points="64.5,47.1 76.7,39.7 88.4,47.2 76.7,54.2" fill="none" stroke="#22ee22" stroke-width="1.3"/><line x1="45.6" y1="58.4" x2="64.5" y2="47.1" stroke="#22ee22" stroke-width="1.3"/><polyline points="26.9,47 26.9,32.8 45.6,43.2 45.6,58.4" fill="none" stroke="#f4f4f4" stroke-width="1"/><line x1="64.3" y1="32" x2="64.3" y2="39" stroke="#f4f4f4" stroke-width="1"/><line x1="64.3" y1="38.3" x2="64.3" y2="46.6" stroke="#ffd800" stroke-width="1.2"/><rect x="0" y="98" width="154" height="20" fill="rgba(255,255,255,0.2)"/></svg><div class="lab" style="height:20px"><span style="color:#fff">SPIRAL POCKET</span></div></div>
</body></html>
